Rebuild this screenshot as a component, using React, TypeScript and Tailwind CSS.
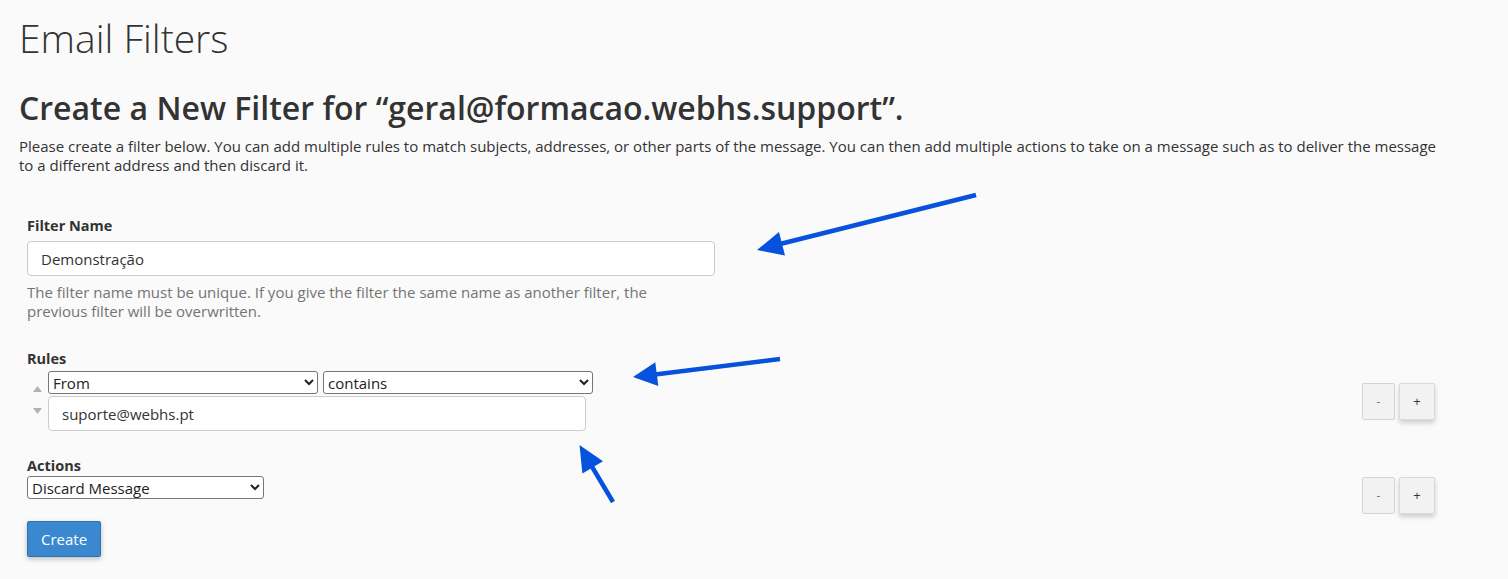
import React from "react";

// Pequeños triángulos para reordenar reglas
function MoveArrows() {
  return (
    <div className="flex w-[21px] flex-col items-center gap-[16px] pt-[15px]">
      <svg width="9" height="6" viewBox="0 0 9 6">
        <polygon points="4.5,0 9,6 0,6" fill="#b3b3b3" />
      </svg>
      <svg width="9" height="6" viewBox="0 0 9 6">
        <polygon points="0,0 9,0 4.5,6" fill="#b3b3b3" />
      </svg>
    </div>
  );
}

function PlusMinus() {
  return (
    <div className="flex gap-[4px]">
      <button className="h-[37px] w-[33px] rounded-[2px] border border-[#d4d4d4] bg-[#f2f2f2] text-[12px] text-[#777]">
        -
      </button>
      <button className="h-[37px] w-[36px] rounded-[2px] border border-[#dadada] bg-[#f2f2f2] text-[13px] text-[#333] shadow-[0_3px_5px_rgba(0,0,0,0.18)]">
        +
      </button>
    </div>
  );
}

const selectCls =
  "h-[23px] rounded-[3px] border border-[#767676] bg-white pl-0 text-[15px] text-[#222] outline-none";

const inputCls =
  "h-[35px] rounded-[4px] border border-[#cccccc] bg-white px-[13px] text-[15px] text-[#333] outline-none";

export default function App() {
  return (
    <main className="relative min-h-[579px] bg-[#fafafa] font-['Open_Sans',sans-serif] text-[#333]">
      <div className="px-[19px] pt-[10px]">
        <h1 className="text-[39px] font-light leading-[56px] text-[#333]">Email Filters</h1>

        <h2 className="mt-[22px] text-[32px] font-semibold leading-[40px]">
          Create a New Filter for “geral@formacao.webhs.support”.
        </h2>
        <p className="mt-[9px] w-[1432px] text-[15px] leading-[19px]">
          Please create a filter below. You can add multiple rules to match subjects, addresses, or other parts of the
          message. You can then add multiple actions to take on a message such as to deliver the message to a different
          address and then discard it.
        </p>

        {/* Formulario */}
        <div className="w-[1416px] pl-[8px] pt-[41px]">
          <label className="block text-[14.5px] font-bold leading-[20px]">Filter Name</label>
          <input defaultValue="Demonstração" className={`${inputCls} mt-[5px] w-[688px]`} />
          <p className="mt-[7px] w-[665px] text-[15px] leading-[18.5px] text-[#747474]">
            The filter name must be unique. If you give the filter the same name as another filter, the previous filter
            will be overwritten.
          </p>

          <label className="mt-[29px] block text-[14.5px] font-bold leading-[20px]">Rules</label>
          <div className="mt-[2px] flex items-start justify-between">
            <div className="flex">
              <MoveArrows />
              <div className="flex flex-col gap-[2px]">
                <div className="flex gap-[5px]">
                  <select defaultValue="From" className={`${selectCls} w-[270px]`}>
                    <option>From</option>
                    <option>Subject</option>
                    <option>To</option>
                  </select>
                  <select defaultValue="contains" className={`${selectCls} w-[270px]`}>
                    <option>contains</option>
                    <option>equals</option>
                  </select>
                </div>
                <input defaultValue="suporte@webhs.pt" className={`${inputCls} w-[538px]`} />
              </div>
            </div>
            <div className="pt-[12px]">
              <PlusMinus />
            </div>
          </div>

          <label className="mt-[25px] block text-[14.5px] font-bold leading-[20px]">Actions</label>
          <div className="flex items-start justify-between">
            <select defaultValue="Discard Message" className={`${selectCls} w-[237px]`}>
              <option>Discard Message</option>
              <option>Redirect to Email</option>
            </select>
            <div className="pt-[1px]">
              <PlusMinus />
            </div>
          </div>

          <div className="mt-[7px]">
            <button className="h-[36px] rounded-[2px] border border-[#2f74b6] bg-[#3a88d0] px-[13px] text-[15px] text-white shadow-[0_2px_5px_rgba(0,0,0,0.25)]">
              Create
            </button>
          </div>
        </div>
      </div>

      {/* Setas de anotação */}
      <svg className="pointer-events-none absolute left-0 top-0" width="1508" height="579">
        <g stroke="#0652dd" strokeWidth="4.5" strokeLinecap="butt">
          <line x1="976" y1="195" x2="780" y2="244" />
          <line x1="780" y1="359" x2="655" y2="374.5" />
          <line x1="613" y1="502" x2="591" y2="465" />
        </g>
        <g fill="#0652dd">
          <polygon points="757,250 785,255.5 779,232" />
          <polygon points="633,377 658.3,386 655.3,362.2" />
          <polygon points="579.5,445 603,461.3 582.4,473.5" />
        </g>
      </svg>
    </main>
  );
}
